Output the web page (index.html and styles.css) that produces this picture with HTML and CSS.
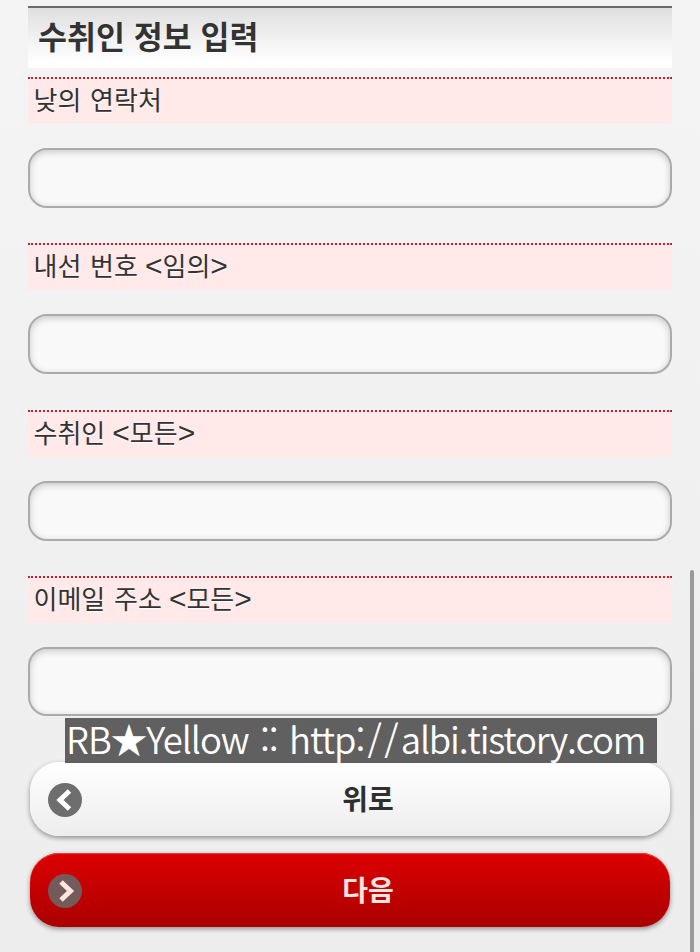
FILE: index.html
```html
<!DOCTYPE html>
<html lang="ko">
<head>
  <meta charset="UTF-8">
  <meta name="viewport" content="width=device-width, initial-scale=1.0">
  <title>수취인 정보 입력</title>
  <link rel="stylesheet" href="styles.css">
</head>
<body>

  <div class="container">
    <h1 class="title">수취인 정보 입력</h1>

    <form class="form">
      <div class="field">
        <label for="phone">낮의 연락처</label>
        <input type="text" id="phone">
      </div>
      <div class="field">
        <label for="ext">내선 번호 <span class="note"><i>&lt;</i>임의<i>&gt;</i></span></label>
        <input type="text" id="ext">
      </div>
      <div class="field">
        <label for="receiver">수취인 <span class="note"><i>&lt;</i>모든<i>&gt;</i></span></label>
        <input type="text" id="receiver">
      </div>
      <div class="field field-last">
        <label for="email">이메일 주소 <span class="note"><i>&lt;</i>모든<i>&gt;</i></span></label>
        <input type="text" id="email">
      </div>

      <div class="buttons">
        <button type="button" class="btn">
          <svg class="icon" viewBox="0 0 34 34">
            <circle cx="17" cy="17" r="17" fill="#6e6e6e"/>
            <path d="M21.5 8 L12 17 L21.5 26" fill="none" stroke="#fff" stroke-width="5"/>
          </svg>
          <span>위로</span>
        </button>
        <button type="button" class="btn btn-next">
          <svg class="icon" viewBox="0 0 34 34">
            <circle cx="17" cy="17" r="17" fill="#735b5b"/>
            <path d="M13 8 L22.5 17 L13 26" fill="none" stroke="#ffe5e2" stroke-width="5"/>
          </svg>
          <span>다음</span>
        </button>
      </div>
    </form>
  </div>

  <div class="watermark">RB★Yellow :: http<span class="slashes">://</span><span class="domain">albi.tistory.com</span></div>
  <div class="scrollbar"></div>

</body>
</html>
```
FILE: styles.css
```css
* {
  margin: 0;
  padding: 0;
  box-sizing: border-box;
}

body {
  position: relative;
  height: 952px;
  overflow: hidden;
  background: linear-gradient(#f4f4f4, #ededed);
  color: #333;
  font-family: "Noto Sans CJK KR", sans-serif;
}

.container {
  padding: 6px 28px 0;
}

/* Title */
.title {
  height: 62px;
  padding-left: 10px;
  border-top: 2px solid #6b6b6b;
  background: linear-gradient(#dfdfdf, #fff 90%);
  font-size: 31.5px;
  line-height: 54px;
  font-weight: 700;
  text-shadow: 0 1px 1px #fff;
}

/* Fields */
.form {
  padding-top: 9px;
}

.field {
  margin-bottom: 35.3px;
}

.field label {
  display: flex;
  align-items: baseline;
  gap: 7px;
  height: 47px;
  margin-bottom: 24px;
  padding-left: 5.5px;
  border-top: 2px dotted #c4202c;
  background: #ffe9e9;
  font-size: 26px;
  line-height: 40px;
  word-spacing: 1.5px;
  text-shadow: 0 1px 1px #fff;
}

.note i {
  font-family: "Liberation Sans", sans-serif;
  font-size: 30px;
  font-style: normal;
  line-height: 1;
}

.field input {
  display: block;
  width: 100%;
  height: 60px;
  padding: 0 16px;
  border: 2px solid #aaa;
  border-radius: 19px;
  background: #f9f9f9;
  box-shadow: inset 0 2px 7px rgba(0, 0, 0, 0.2);
  font-size: 26px;
}

.field-last input {
  height: 69px;
}

/* Buttons */
.buttons {
  display: flex;
  flex-direction: column;
  gap: 17px;
  padding: 11px 2px 0;
}

.btn {
  display: flex;
  align-items: center;
  height: 74px;
  padding: 2px 16px 0 18px;
  border: none;
  border-radius: 29px;
  background: linear-gradient(#fff, #ededed);
  box-shadow: 0 2px 5px rgba(0, 0, 0, 0.4);
  color: #2f2f2f;
  font-family: inherit;
  font-size: 28px;
  font-weight: 700;
}

.btn span {
  flex: 1;
  padding-bottom: 5px;
}

.btn-next {
  background: linear-gradient(#dc0000, #aa0000);
  box-shadow: 0 2px 5px rgba(0, 0, 0, 0.4), inset 0 1px 0 #ee3c3c;
  color: #ffe5e2;
}

.icon {
  width: 34px;
  height: 34px;
}

/* Blog mark over the form */
.watermark {
  position: absolute;
  left: 65px;
  top: 718px;
  width: 592px;
  height: 45px;
  padding-left: 1px;
  background: #606060;
  color: #fff;
  font-size: 36.5px;
  font-weight: 400;
  letter-spacing: -1px;
  word-spacing: 2px;
  line-height: 41px;
  white-space: nowrap;
  font-weight: 350;
}

.slashes {
  letter-spacing: 2.2px;
}

.domain {
  letter-spacing: -1.2px;
}

.scrollbar {
  position: absolute;
  left: 690px;
  top: 570px;
  width: 4px;
  height: 390px;
  border-radius: 2px;
  background: #999;
}
```
